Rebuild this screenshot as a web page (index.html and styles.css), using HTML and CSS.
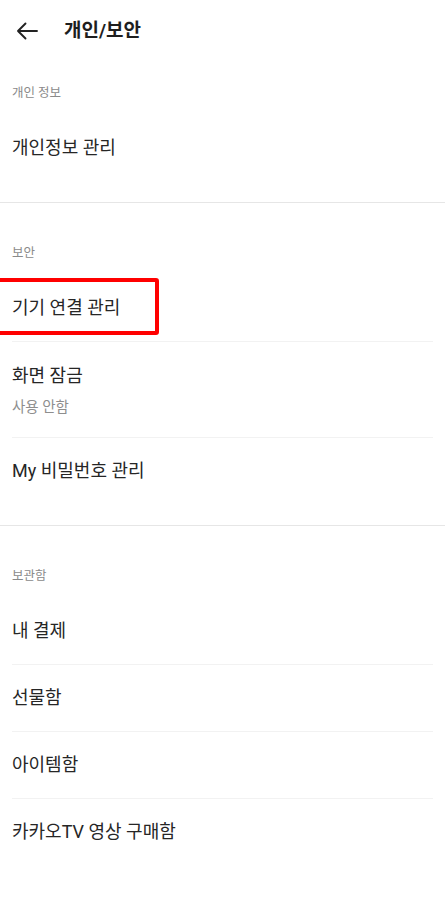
FILE: index.html
```html
<!DOCTYPE html>
<html lang="ko">
<head>
<meta charset="utf-8">
<title>개인/보안</title>
<link rel="stylesheet" href="styles.css">
</head>
<body>
<header class="topbar">
  <svg class="back" width="24" height="24" viewBox="0 0 24 24" aria-hidden="true">
    <path d="M22 12H3M10.5 4.5L3 12l7.5 7.5" fill="none" stroke="#222" stroke-width="1.9" stroke-linecap="round" stroke-linejoin="round"/>
  </svg>
  <h1 class="title">개인/보안</h1>
</header>

<section class="section first">
  <div class="label">개인 정보</div>
  <ul class="list">
    <li class="row">개인정보 관리</li>
  </ul>
</section>

<section class="section">
  <div class="label">보안</div>
  <ul class="list">
    <li class="row highlighted">기기 연결 관리<span class="mark"></span></li>
    <li class="row two">
      <span class="row-title">화면 잠금</span>
      <span class="row-sub">사용 안함</span>
    </li>
    <li class="row">My 비밀번호 관리</li>
  </ul>
</section>

<section class="section last">
  <div class="label">보관함</div>
  <ul class="list">
    <li class="row">내 결제</li>
    <li class="row">선물함</li>
    <li class="row">아이템함</li>
    <li class="row">카카오TV 영상 구매함</li>
  </ul>
</section>
</body>
</html>
```

FILE: styles.css
```css
* { box-sizing: border-box; }
html, body {
  margin: 0;
  padding: 0;
  background: #fff;
}
body {
  font-family: Roboto, "Noto Sans CJK KR", sans-serif;
  color: #222;
  overflow-x: hidden;
}
.topbar {
  height: 62px;
  display: flex;
  align-items: center;
  padding-left: 15px;
}
.back { display: block; flex: none; }
.title {
  margin: 0 0 0 25px;
  font-size: 19px;
  font-weight: 700;
  line-height: 24px;
  color: #1e1e1e;
}
.section {
  padding-top: 41px;
  padding-bottom: 21px;
  border-bottom: 1px solid #e6e6e6;
}
.section.first { padding-top: 22px; }
.section.last { border-bottom: none; }
.label {
  padding: 0 12px;
  font-size: 12.5px;
  line-height: 18px;
  color: #8a8a8a;
  margin-bottom: 13px;
}
.list {
  list-style: none;
  margin: 0;
  padding: 0 12px;
}
.row {
  position: relative;
  height: 67px;
  display: flex;
  align-items: center;
  font-size: 18px;
  line-height: 24px;
  color: #262626;
  border-bottom: 1px solid #f2f2f2;
}
.row:last-child { border-bottom: none; height: 66px; }
.row.two {
  height: 96px;
  flex-direction: column;
  align-items: flex-start;
  justify-content: flex-start;
  padding-top: 22px;
}
.row-title { line-height: 24px; }
.row-sub {
  margin-top: 10px;
  font-size: 14.5px;
  line-height: 20px;
  color: #8e8e8e;
}
.mark {
  position: absolute;
  left: -16px;
  top: 3px;
  width: 163px;
  height: 57px;
  border: 4px solid #ff0000;
  border-radius: 3px;
  pointer-events: none;
}
```
